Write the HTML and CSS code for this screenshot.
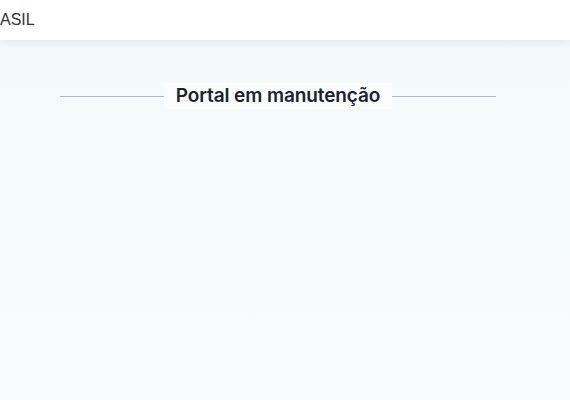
FILE: index.html
```html
<!DOCTYPE html>
<html lang="pt-BR">
<head>
<meta charset="utf-8">
<title>Portal em manutenção</title>
<link rel="stylesheet" href="styles.css">
</head>
<body>
<header class="topbar">
  <span class="brand">ASIL</span>
</header>
<main class="content">
  <div class="divider-title">
    <span class="line"></span>
    <h1 class="title">Portal em manutenção</h1>
    <span class="line"></span>
  </div>
</main>
</body>
</html>
```
FILE: styles.css
```css
html, body {
  margin: 0;
  padding: 0;
  height: 100%;
}
body {
  background: linear-gradient(180deg, #f3f9f8 0%, #f6fbfc 50%, #f9fcfc 100%);
  font-family: "Liberation Sans", Arial, sans-serif;
  overflow: hidden;
}
.topbar {
  height: 40px;
  background: #ffffff;
  box-shadow: 0 2px 8px rgba(60, 80, 80, 0.10);
  display: flex;
  align-items: center;
}
.brand {
  font-size: 16px;
  color: #333333;
  white-space: nowrap;
  line-height: 1;
}
.content {
  padding: 43px 74px 0 60px;
}
.divider-title {
  display: flex;
  align-items: center;
}
.line {
  flex: 1;
  height: 1px;
  background: #a9b9c5;
}
.title {
  margin: 0;
  padding: 0 12px;
  background: #fbfdfd;
  font-family: Inter, "Noto Sans", sans-serif;
  font-weight: 600;
  font-size: 19px;
  line-height: 26px;
  color: #1b2232;
  letter-spacing: -0.1px;
}
```
